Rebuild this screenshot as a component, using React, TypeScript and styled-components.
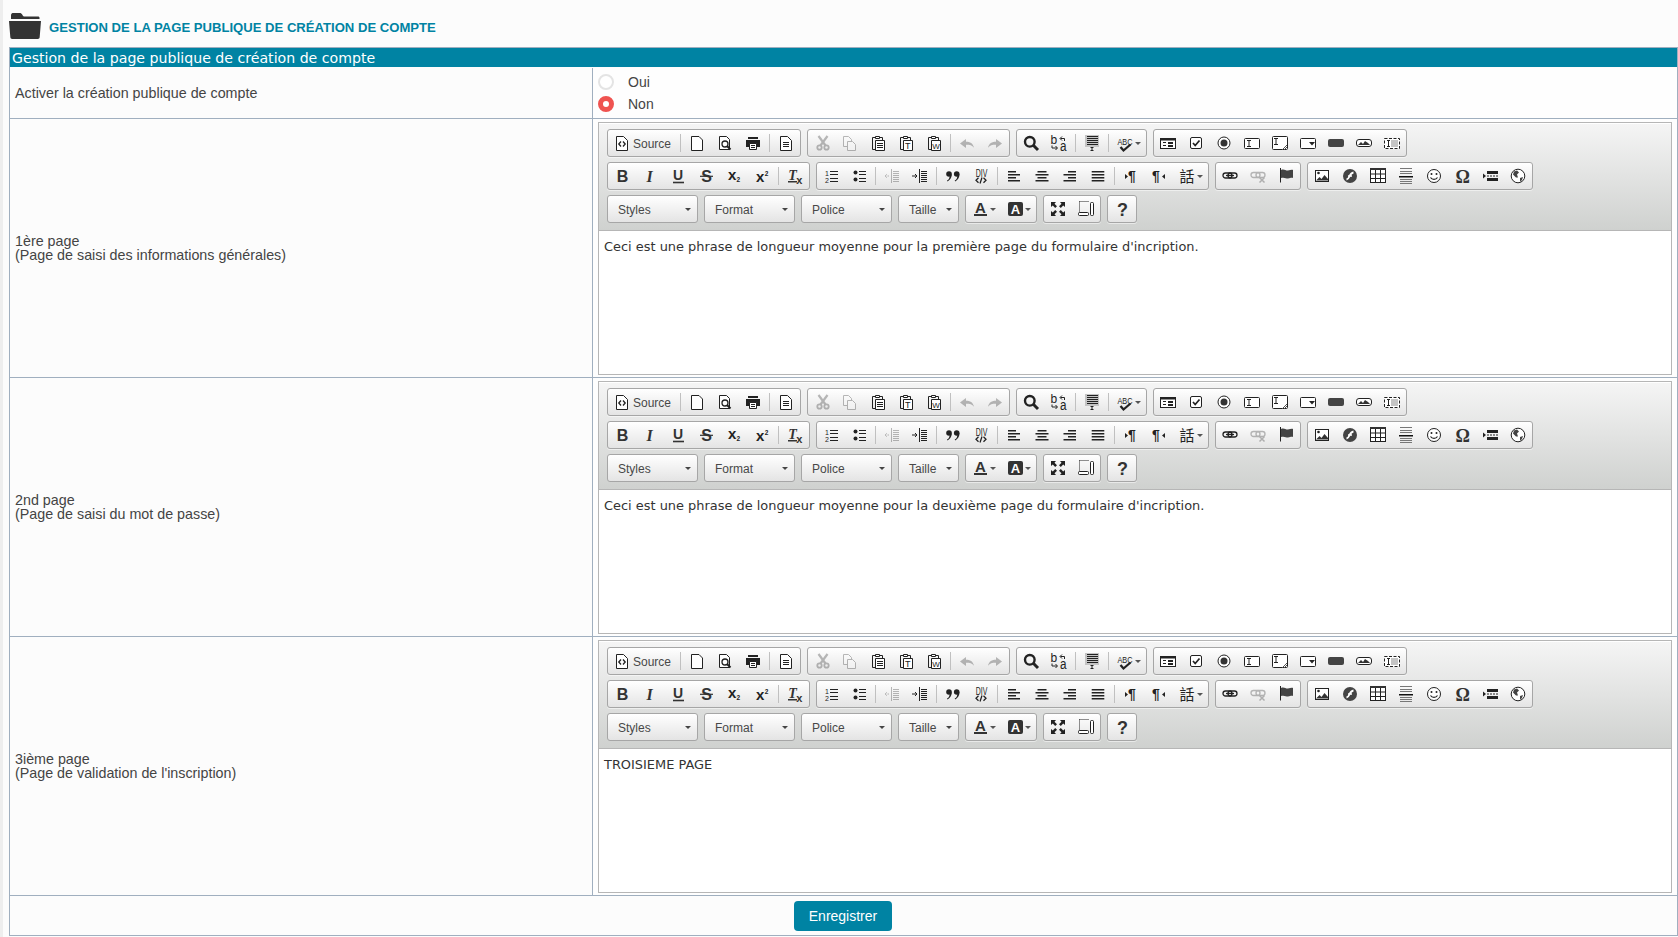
import React from "react";
import styled, { createGlobalStyle } from "styled-components";

const Global = createGlobalStyle`
  html, body { margin: 0; padding: 0; background: #fcfcfc; }
  body { font-family: "Liberation Sans", Arial, sans-serif; color: #444; font-size: 14px; }
`;

const Page = styled.div`
  box-sizing: border-box;
  width: 1678px;
  height: 937px;
  overflow: hidden;
  padding-left: 9px;
  border-left: 3px solid #eeeeee;
  display: flex;
  flex-direction: column;
  background: #fcfcfc;
`;
const Head = styled.div`
  height: 47px;
  display: flex;
  align-items: flex-start;
  margin-left: -3px;
  flex: none;
`;
const Folder = styled.svg`
  width: 32px;
  height: 27px;
  margin: 12px 0 0 0;
  flex: none;
`;
const HeadTitle = styled.h1`
  margin: 20px 0 0 8px;
  font-size: 13.1px;
  line-height: 15px;
  font-weight: bold;
  color: #0083a3;
  text-transform: uppercase;
`;
const Table = styled.div`
  border: 1px solid #a0afbf;
  border-bottom: none;
  margin-left: -3px;
  width: 1669px;
  box-sizing: border-box;
`;
const TitleBar = styled.div`
  height: 19px;
  background: #0083a3;
  color: #fff;
  font-family: "DejaVu Sans", sans-serif;
  font-size: 14.13px;
  line-height: 20px;
  padding-left: 2px;
  margin-bottom: 1px;
`;
const Row = styled.div<{ $h: number }>`
  display: grid;
  grid-template-columns: 582px 1fr;
  height: ${(p) => p.$h}px;
  border-bottom: 1px solid #a0afbf;
  box-sizing: content-box;
`;
const Label = styled.div`
  display: flex;
  flex-direction: column;
  justify-content: center;
  padding-left: 5px;
  font-size: 14.3px;
  line-height: 14px;
  color: #444;
`;
const Cell = styled.div`
  border-left: 1px solid #a0afbf;
  padding: 3px 5px 0 5px;
  background: #fefefe;
`;
const RadioCell = styled(Cell)`
  display: flex;
  flex-direction: column;
  padding: 6px 0 0 5px;
  gap: 6px;
`;
const RadioLine = styled.div`
  display: flex;
  align-items: center;
  height: 16px;
  gap: 14px;
  font-size: 14px;
  color: #444;
`;
const RadioDot = styled.span<{ $on?: boolean }>`
  box-sizing: border-box;
  width: 16px;
  height: 16px;
  border-radius: 50%;
  border: ${(p) => (p.$on ? "5px solid #ef5350" : "2px solid #e4e4e4")};
  background: #fff;
`;
const Editor = styled.div`
  box-sizing: border-box;
  height: 253px;
  border: 1px solid #b6b6b6;
  display: flex;
  flex-direction: column;
  background: #fff;
`;
const Toolbar = styled.div`
  box-sizing: border-box;
  height: 108px;
  padding: 6px 8px 0 8px;
  background: linear-gradient(to bottom, #f5f5f5, #cfd1cf);
  border-bottom: 1px solid #b6b6b6;
  box-shadow: inset 0 1px 0 #fff;
`;
const ToolRow = styled.div`
  display: flex;
  gap: 6px;
  height: 28px;
  margin-bottom: 5px;
`;
const Group = styled.div`
  display: flex;
  border: 1px solid #a6a6a6;
  border-radius: 3px;
  background: linear-gradient(to bottom, #ffffff, #e4e4e4);
  box-shadow: 0 1px 0 rgba(255, 255, 255, 0.5);
`;
const Btn = styled.span<{ $w?: number }>`
  box-sizing: border-box;
  width: ${(p) => p.$w ?? 28}px;
  height: 26px;
  padding: 5px 0 0 6px;
  display: flex;
  align-items: flex-start;
  flex: none;
`;
const Glyph = styled.svg<{ $off?: boolean }>`
  width: 16px;
  height: 16px;
  flex: none;
  opacity: ${(p) => (p.$off ? 0.3 : 1)};
  overflow: visible;
`;
const BtnLabel = styled.span`
  font-size: 12px;
  line-height: 18px;
  margin-left: 3px;
  color: #484848;
`;
const Sep = styled.span`
  width: 1px;
  height: 18px;
  margin: 4px 2px 0;
  background: #c0c0c0;
  flex: none;
`;
const MiniArrow = styled.span`
  width: 0;
  height: 0;
  margin: 7px 0 0 2px;
  border-left: 3px solid transparent;
  border-right: 3px solid transparent;
  border-top: 3px solid #555;
`;
const Combo = styled.div<{ $w: number }>`
  box-sizing: border-box;
  width: ${(p) => p.$w}px;
  height: 28px;
  border: 1px solid #a6a6a6;
  border-radius: 3px;
  background: linear-gradient(to bottom, #ffffff, #e4e4e4);
  display: flex;
  align-items: center;
  justify-content: space-between;
  padding: 1px 6px 0 10px;
  font-size: 12px;
  color: #484848;
`;
const ComboArrow = styled.span`
  border-left: 3px solid transparent;
  border-right: 3px solid transparent;
  border-top: 3px solid #444;
`;
const Content = styled.div`
  flex: 1;
  padding: 7px 5px;
  font-family: "DejaVu Sans", sans-serif;
  font-size: 12.93px;
  line-height: 17px;
  color: #333;
  background: #fff;
`;
const FootRow = styled.div`
  height: 40px;
  display: flex;
  justify-content: center;
  align-items: flex-start;
  padding: 5px 0 0 0;
  box-sizing: border-box;
  border-bottom: 1px solid #a0afbf;
`;
const Save = styled.button`
  width: 98px;
  height: 30px;
  margin-left: -1px;
  border: none;
  border-radius: 4px;
  background: #0083a3;
  color: #fff;
  font-family: "Liberation Sans", Arial, sans-serif;
  font-size: 14px;
  padding: 0;
`;

const S = "#222";
const txt = (x: number, y: number, size: number, s: string, extra: any = {}) => (
  <text x={x} y={y} fontSize={size} fontFamily='"Liberation Sans", sans-serif' fontWeight="bold" fill={S} {...extra}>
    {s}
  </text>
);
const clip = (inner: React.ReactNode) => (
  <g transform="translate(1 0)">
    <path d="M1.500 2.500h10v12h-10z" fill="none" stroke={S} />
    <path d="M4.500 1.500h4v2h-4z" fill="#fff" stroke={S} />
    <path d="M4.500 5.500h9v10h-9z" fill="#fff" stroke={S} />
    {inner}
  </g>
);
const lines = (ys: number[], x: number, w: number, t = 1) =>
  ys.map((y) => <rect key={y} x={x} y={y} width={w} height={t} fill={S} />);

const icons: Record<string, React.ReactNode> = {
  source: (
    <>
      <path d="M2.500 1.500h7l4 4v10h-11z" fill="#fff" stroke={S} />
      <path d="M7 6.500 4.800 9 7 11.500M9 6.500 11.200 9 9 11.500" fill="none" stroke={S} strokeWidth="1.300" />
    </>
  ),
  newpage: <path d="M2.500 1.500h7.500l3.500 3.500v10.500h-11z" fill="#fff" stroke={S} />,
  preview: (
    <>
      <path d="M2.500 1.500h7l3 3v10h-10z" fill="#fff" stroke={S} />
      <circle cx="8" cy="9" r="3" fill="#fff" stroke={S} strokeWidth="1.300" />
      <path d="M10 11l3.500 3.500" stroke={S} strokeWidth="2" />
    </>
  ),
  print: (
    <>
      <path d="M3 2h10v2H3z" fill={S} />
      <path d="M1 5h14v7H1z" fill={S} />
      <path d="M4.500 8.500h7v6h-7z" fill="#fff" stroke={S} />
      <path d="M6 10h4v1H6zM6 12h4v1H6z" fill={S} />
    </>
  ),
  templates: (
    <>
      <path d="M2.500 1.500h7l4 4v10h-11z" fill="#fff" stroke={S} />
      {lines([7, 9, 11], 5, 6)}
    </>
  ),
  cut: (
    <>
      <circle cx="5.500" cy="12.500" r="2.200" fill="none" stroke={S} strokeWidth="1.800" />
      <circle cx="12.500" cy="12.500" r="2.200" fill="none" stroke={S} strokeWidth="1.800" />
      <path d="M4.500 1l7 9.500M13.500 1l-7 9.500" stroke={S} strokeWidth="2.200" />
    </>
  ),
  copy: (
    <>
      <path d="M1.500 1.500h5l3 3v7h-8z" fill="#fff" stroke={S} />
      <path d="M5.500 6.500h5l3 3v6h-8z" fill="#fff" stroke={S} />
    </>
  ),
  paste: clip(lines([8, 10, 12], 6, 6)),
  pastetext: clip(txt(6, 14, 9, "T", { fontWeight: "normal" })),
  pasteword: clip(txt(5.300, 14, 8, "W", { fontWeight: "normal" })),
  undo: <path d="M1 8.500 7 4v2.800c4 0 7 1.500 8 6-2-2.500-4-3-8-3V13z" fill={S} />,
  redo: <path d="M15 8.500 9 4v2.800c-4 0-7 1.500-8 6 2-2.500 4-3 8-3V13z" fill={S} />,
  find: (
    <>
      <circle cx="6.800" cy="6.800" r="4.800" fill="none" stroke={S} strokeWidth="2.400" />
      <path d="M10.300 10.300l4.700 4.700" stroke={S} strokeWidth="3" />
    </>
  ),
  replace: (
    <>
      {txt(-0.5, 9.300, 12, "b", { fontWeight: "normal" })}
      {txt(9, 16.300, 14, "a", { fontWeight: "normal", textLength: 6.500, lengthAdjust: "spacingAndGlyphs" })}
      <path d="M13.500 6V3.500H9.500M11 1.500 9 3.500l2 2" fill="none" stroke={S} />
      <path d="M1 10.500v2.500h5M4.500 11l2 2-2 2" fill="none" stroke={S} />
    </>
  ),
  selectall: (
    <>
      <path d="M1 0h14v12H1z" fill="#c4c4c4" />
      {lines([1, 3, 5, 7, 9], 3, 11)}
      <path d="M6.500 12.500h3M6.500 15.500h3M8 12.500v3" stroke={S} fill="none" />
    </>
  ),
  spell: (
    <>
      {txt(0.5, 9.500, 9.800, "ABC", { fontWeight: "normal", textLength: 15, lengthAdjust: "spacingAndGlyphs" })}
      <path d="M3.500 12l3 3.500 7-6" fill="none" stroke={S} strokeWidth="2.300" />
    </>
  ),
  form: (
    <>
      <rect x=".5" y="3.500" width="15" height="10" fill="#fff" stroke={S} />
      <rect x="1" y="4" width="14" height="1.500" fill={S} />
      <path d="M3 7h3v1H3zM3 10h3v1H3zM8 7h5v2H8zM8 10h5v2H8z" fill={S} />
    </>
  ),
  checkbox: (
    <>
      <rect x="2.500" y="2.500" width="11" height="11" rx="1.500" fill="#fff" stroke={S} />
      <path d="M5 8l2.200 2.500L11.500 5.500" fill="none" stroke={S} strokeWidth="1.700" />
    </>
  ),
  radio: (
    <>
      <circle cx="8" cy="8" r="6" fill="#fff" stroke={S} />
      <circle cx="8" cy="8" r="3.500" fill="#333" />
    </>
  ),
  textfield: (
    <>
      <rect x=".5" y="3.500" width="15" height="10" rx="1" fill="#fff" stroke={S} />
      <path d="M3 5.500h4M3 11.500h4M5 5.500v6" stroke={S} fill="none" />
    </>
  ),
  textarea: (
    <>
      <rect x=".5" y="1.500" width="15" height="13" rx="1" fill="#fff" stroke={S} />
      <path d="M2 3.500h4M2 9.500h4M4 3.500v6" stroke={S} fill="none" />
      <path d="M15 10l-5 5M15 12l-3 3M15 14l-1 1" stroke="#555" />
    </>
  ),
  select: (
    <>
      <rect x=".5" y="3.500" width="15" height="10" rx="1" fill="#fff" stroke={S} />
      <path d="M9 7h6l-3 3.500z" fill={S} />
    </>
  ),
  button: <rect x="0" y="4" width="16" height="8" rx="2" fill="#444" />,
  imagebutton: (
    <>
      <rect x=".5" y="4.500" width="15" height="7" rx="2.500" fill="#fff" stroke={S} />
      <path d="M2 10l3-3 2 2 2-3 3 2 2 2z" fill="#333" />
    </>
  ),
  hiddenfield: (
    <>
      <rect x=".5" y="3.500" width="15" height="10" fill="#fff" stroke={S} strokeDasharray="3 1.500" />
      <rect x="7" y="5" width="7" height="7" fill="#c4c4c4" />
      <path d="M3 5.500h3M3 11.500h3M4.500 5.500v6" stroke={S} fill="none" />
    </>
  ),
  bold: txt(2.700, 13.700, 16, "B", { fill: "#333" }),
  italic: txt(4.500, 13.700, 16, "I", { fontFamily: '"Liberation Serif", serif', fontStyle: "italic", fill: "#333" }),
  underline: (
    <>
      {txt(3, 12, 14, "U", { fill: "#333" })}
      <rect x="3" y="13.700" width="11" height="1.600" fill="#333" />
    </>
  ),
  strike: (
    <>
      {txt(3.200, 13.700, 16, "S", { fill: "#333" })}
      <rect x="2" y="7.700" width="13" height="1.200" fill="#333" />
    </>
  ),
  sub: (
    <>
      {txt(2, 12, 15, "x", { fill: "#222" })}
      {txt(10.500, 14, 6.500, "2", { fill: "#222" })}
    </>
  ),
  sup: (
    <>
      {txt(2, 13.700, 15, "x", { fill: "#222" })}
      {txt(10.700, 7.500, 6.500, "2", { fill: "#222" })}
    </>
  ),
  removeformat: (
    <>
      {txt(1.300, 12, 14, "T", { fontFamily: '"Liberation Serif", serif', fontStyle: "italic", fill: "#333" })}
      <rect x="1" y="13" width="9" height="1.500" fill="#333" />
      {txt(9.300, 15.700, 11, "x", { fill: "#333" })}
    </>
  ),
  ol: (
    <>
      {txt(2, 7.500, 7, "1", { fontWeight: "normal" })}
      {txt(2, 15, 7, "2", { fontWeight: "normal" })}
      {lines([3, 6, 10, 13], 7, 8, 1)}
    </>
  ),
  ul: (
    <>
      <circle cx="4.500" cy="4.500" r="2" fill={S} />
      <circle cx="4.500" cy="11.500" r="2" fill={S} />
      {lines([3, 6, 10, 13], 8, 7, 1)}
    </>
  ),
  outdent: (
    <>
      <path d="M1 8h4M3 6L1 8l2 2" fill="none" stroke={S} strokeDasharray="1 .5" />
      <rect x="7" y="1" width="1" height="14" fill={S} />
      {lines([3, 5, 7, 9, 11, 13], 9, 6)}
    </>
  ),
  indent: (
    <>
      <path d="M0 8h4.500M3 6l2 2-2 2" fill="none" stroke={S} />
      <rect x="7" y="1" width="1" height="14" fill={S} />
      {lines([3, 5, 7, 9, 11, 13], 9, 6)}
    </>
  ),
  quote: (
    <>
      <circle cx="4" cy="6" r="2.800" fill={S} />
      <path d="M6.800 6c0 4-2 6-4.300 7.500l-.5-1c2-1 2.500-2.500 2.500-4z" fill={S} />
      <circle cx="11.700" cy="6" r="2.800" fill={S} />
      <path d="M14.500 6c0 4-2 6-4.300 7.500l-.5-1c2-1 2.500-2.500 2.500-4z" fill={S} />
    </>
  ),
  div: (
    <>
      {txt(2.700, 8.500, 10.500, "DIV", { fontWeight: "normal", textLength: 11.600, lengthAdjust: "spacingAndGlyphs" })}
      <path d="M5.500 9.800 3 12.300l2.500 2.500M10.500 9.800l2.500 2.500-2.500 2.500M9 9.500l-2 6" fill="none" stroke={S} strokeWidth="1.300" />
    </>
  ),
  left: <path d="M2 3h8v1.500H2zM2 6h12v1.500H2zM2 9h8v1.500H2zM2 12h12v1.500H2z" fill={S} />,
  center: <path d="M3.500 3h9v1.500h-9zM1.500 6h13v1.500h-13zM3.500 9h9v1.500h-9zM1.500 12h13v1.500h-13z" fill={S} />,
  right: <path d="M6 3h8v1.500H6zM1.500 6h12.500v1.500H1.500zM6 9h8v1.500H6zM1.500 12h12.500v1.500H1.500z" fill={S} />,
  justify: <path d="M1.700 3h12.600v1.500H1.700zM1.700 6h12.600v1.500H1.700zM1.700 9h12.600v1.500H1.700zM1.700 12h12.600v1.500H1.700z" fill={S} />,
  ltr: (
    <>
      <path d="M2 6l3 2.500L2 11z" fill={S} />
      {txt(5, 13, 14, "¶")}
    </>
  ),
  rtl: (
    <>
      {txt(1, 13, 14, "¶")}
      <path d="M14 6l-3 2.500 3 2.500z" fill={S} />
    </>
  ),
  lang: (
    <text x="0.500" y="14" fontSize="15" fontFamily='"Noto Sans CJK TC", sans-serif' fill={S}>
      話
    </text>
  ),
  link: (
    <>
      <rect x="1" y="5" width="9" height="5" rx="2.500" fill="none" stroke={S} strokeWidth="1.300" />
      <rect x="6" y="5" width="9" height="5" rx="2.500" fill="none" stroke={S} strokeWidth="1.300" />
      <path d="M4 7.500h8" stroke={S} strokeWidth="1.300" />
    </>
  ),
  unlink: (
    <>
      <rect x="1" y="4.500" width="9" height="5" rx="2.500" fill="none" stroke={S} strokeWidth="1.300" />
      <rect x="6" y="4.500" width="9" height="5" rx="2.500" fill="none" stroke={S} strokeWidth="1.300" />
      <path d="M9.500 9.500l5 5M14.500 9.500l-5 5" stroke={S} strokeWidth="1.500" />
    </>
  ),
  anchor: (
    <>
      <rect x="2" y="0" width="1" height="14.500" fill={S} />
      <path d="M3 2c3-1.500 5 1 7 .5s4-1 5-.5v8c-2-.5-3 .5-5 .5s-4-1.500-7-.5z" fill="#444" />
    </>
  ),
  image: (
    <>
      <rect x="1.500" y="2.500" width="13" height="11" fill="#fff" stroke={S} />
      <circle cx="4.500" cy="5" r="1.300" fill={S} />
      <path d="M2 12.500l3.500-3.500 2 2 3-4 3.500 4v1.500z" fill="#333" />
    </>
  ),
  flash: (
    <>
      <circle cx="8" cy="8" r="7" fill="#444" />
      <path d="M4.500 11.500C8 11 7 5 11.500 4.500" fill="none" stroke="#fff" strokeWidth="1.800" />
      <path d="M6 8h4" stroke="#fff" strokeWidth="1.500" />
    </>
  ),
  table: (
    <>
      <rect x=".5" y=".5" width="15" height="14" fill="#fff" stroke={S} />
      <rect x="0" y="0" width="16" height="2" fill="#333" />
      <path d="M5.500 2v12M10.500 2v12M1 6h14M1 10.500h14" stroke={S} />
    </>
  ),
  hr: (
    <>
      <path d="M2 0h12v1H2zM2 3h12v1H2zM2 5h12v1H2zM2 11h12v1H2zM2 13h12v1H2zM2 15h12v1H2z" fill="#777" />
      <rect x="1" y="8" width="14" height="1.500" fill="#111" />
    </>
  ),
  smiley: (
    <>
      <circle cx="8" cy="8" r="6.500" fill="#fff" stroke={S} />
      <circle cx="5.500" cy="6" r="1" fill={S} />
      <circle cx="10.500" cy="6" r="1" fill={S} />
      <path d="M4.500 9.500c1.500 2.500 5.500 2.500 7 0" fill="none" stroke={S} strokeWidth="1.200" />
    </>
  ),
  special: txt(1.500, 15.300, 18, "Ω", { fontFamily: '"Liberation Serif", serif', fill: "#333" }),
  pagebreak: (
    <>
      <path d="M1 5.500l3 2.500-3 2.500z" fill={S} />
      <path d="M5 3h11v3H5zM5 10h11v3H5z" fill={S} />
      <path d="M5 8h11" stroke={S} strokeDasharray="2 1" />
    </>
  ),
  iframe: (
    <>
      <circle cx="8" cy="8" r="6.800" fill="#fff" stroke={S} />
      <path d="M4 3.500l3-1 2 2-2 2 1 3-2 0-3-3zM10 10l3-1-1 3-2 2z" fill="#444" />
    </>
  ),
  color: (
    <>
      {txt(3, 11.500, 15, "A", { fill: "#333" })}
      <rect x="2" y="13" width="13" height="2" fill="#333" />
    </>
  ),
  bg: (
    <>
      <rect x="1" y="1" width="15" height="14" rx="2" fill="#333" />
      {txt(3.800, 13, 13, "A", { fill: "#fff" })}
    </>
  ),
  maximize: (
    <>
      <path d="M1 1h5L4.500 2.800 7 5.200 5.200 7 2.800 4.500 1 6zM15 1v5l-1.800-1.500L10.800 7 9 5.200l2.500-2.400L10 1zM1 15v-5l1.800 1.500L5.200 9 7 10.800l-2.500 2.400L6 15zM15 15h-5l1.500-1.800L9 10.800 10.800 9l2.400 2.500L15 10z" fill={S} />
    </>
  ),
  showblocks: (
    <>
      <path d="M1.500 .5h9M1.500 .5v11" stroke={S} strokeDasharray="1 1" fill="none" />
      <rect x="12.500" y="1.500" width="3" height="13" rx="1" fill="#fff" stroke={S} />
      <rect x=".5" y="11.500" width="10" height="3" rx="1" fill="#fff" stroke={S} />
    </>
  ),
  help: txt(3, 15, 18, "?", { fill: "#333" }),
};

type Item = string | { n: string; off?: boolean; arrow?: boolean };
const off = (n: string) => ({ n, off: true });
const arrow = (n: string) => ({ n, arrow: true });

const row1: Item[][] = [
  ["SOURCE", "|", "newpage", "preview", "print", "|", "templates"],
  [off("cut"), off("copy"), "paste", "pastetext", "pasteword", "|", off("undo"), off("redo")],
  ["find", "replace", "|", "selectall", "|", arrow("spell")],
  ["form", "checkbox", "radio", "textfield", "textarea", "select", "button", "imagebutton", "hiddenfield"],
];
const row2: Item[][] = [
  ["bold", "italic", "underline", "strike", "sub", "sup", "|", "removeformat"],
  ["ol", "ul", "|", off("outdent"), "indent", "|", "quote", "div", "|", "left", "center", "right", "justify", "|", "ltr", "rtl", arrow("lang")],
  ["link", off("unlink"), "anchor"],
  ["image", "flash", "table", "hr", "smiley", "special", "pagebreak", "iframe"],
];

const Icon = ({ name, disabled }: { name: string; disabled?: boolean }) => (
  <Glyph viewBox="0 0 16 16" $off={disabled}>
    {icons[name]}
  </Glyph>
);

const Tool = ({ item }: { item: Item }) => {
  if (item === "|") return <Sep />;
  if (item === "SOURCE")
    return (
      <Btn $w={70}>
        <Icon name="source" />
        <BtnLabel>Source</BtnLabel>
      </Btn>
    );
  const o = typeof item === "string" ? { n: item } : item;
  return (
    <Btn $w={"arrow" in o && o.arrow ? 35 : 28}>
      <Icon name={o.n} disabled={"off" in o ? o.off : false} />
      {"arrow" in o && o.arrow && <MiniArrow />}
    </Btn>
  );
};

const Groups = ({ groups }: { groups: Item[][] }) => (
  <ToolRow>
    {groups.map((g, i) => (
      <Group key={i}>
        {g.map((it, j) => (
          <Tool key={j} item={it} />
        ))}
      </Group>
    ))}
  </ToolRow>
);

const RichEditor = ({ text }: { text: string }) => (
  <Editor>
    <Toolbar>
      <Groups groups={row1} />
      <Groups groups={row2} />
      <ToolRow>
        {[
          ["Styles", 91],
          ["Format", 91],
          ["Police", 91],
          ["Taille", 61],
        ].map(([l, w]) => (
          <Combo key={l as string} $w={w as number}>
            {l}
            <ComboArrow />
          </Combo>
        ))}
        <Group>
          <Tool item={arrow("color")} />
          <Tool item={arrow("bg")} />
        </Group>
        <Group>
          <Tool item="maximize" />
          <Tool item="showblocks" />
        </Group>
        <Group>
          <Tool item="help" />
        </Group>
      </ToolRow>
    </Toolbar>
    <Content>{text}</Content>
  </Editor>
);

const pages = [
  ["1ère page", "(Page de saisi des informations générales)", "Ceci est une phrase de longueur moyenne pour la première page du formulaire d'incription."],
  ["2nd page", "(Page de saisi du mot de passe)", "Ceci est une phrase de longueur moyenne pour la deuxième page du formulaire d'incription."],
  ["3ième page", "(Page de validation de l'inscription)", "TROISIEME PAGE"],
];

export default function App() {
  return (
    <Page>
      <Global />
      <Head>
        <Folder viewBox="0 0 32 27">
          <path d="M2 3.500C2 1.500 3 1 4.500 1h6c1.500 0 2 .5 3 2 .5 1 1 1.500 2.500 1.500h13c1 0 1.500.5 1.500 1.500v1H2z" fill="#333" />
          <path d="M0 9h32l-1.300 16c0 1-.7 2-2 2H3.300c-1.300 0-2-1-2-2z" fill="#333" />
        </Folder>
        <HeadTitle>Gestion de la page publique de création de compte</HeadTitle>
      </Head>
      <Table>
        <TitleBar>Gestion de la page publique de création de compte</TitleBar>
        <Row $h={50}>
          <Label>Activer la création publique de compte</Label>
          <RadioCell>
            <RadioLine>
              <RadioDot />
              Oui
            </RadioLine>
            <RadioLine>
              <RadioDot $on />
              Non
            </RadioLine>
          </RadioCell>
        </Row>
        {pages.map(([a, b, c]) => (
          <Row $h={258} key={a}>
            <Label>
              <span>{a}</span>
              <span>{b}</span>
            </Label>
            <Cell>
              <RichEditor text={c} />
            </Cell>
          </Row>
        ))}
        <FootRow>
          <Save>Enregistrer</Save>
        </FootRow>
      </Table>
    </Page>
  );
}
